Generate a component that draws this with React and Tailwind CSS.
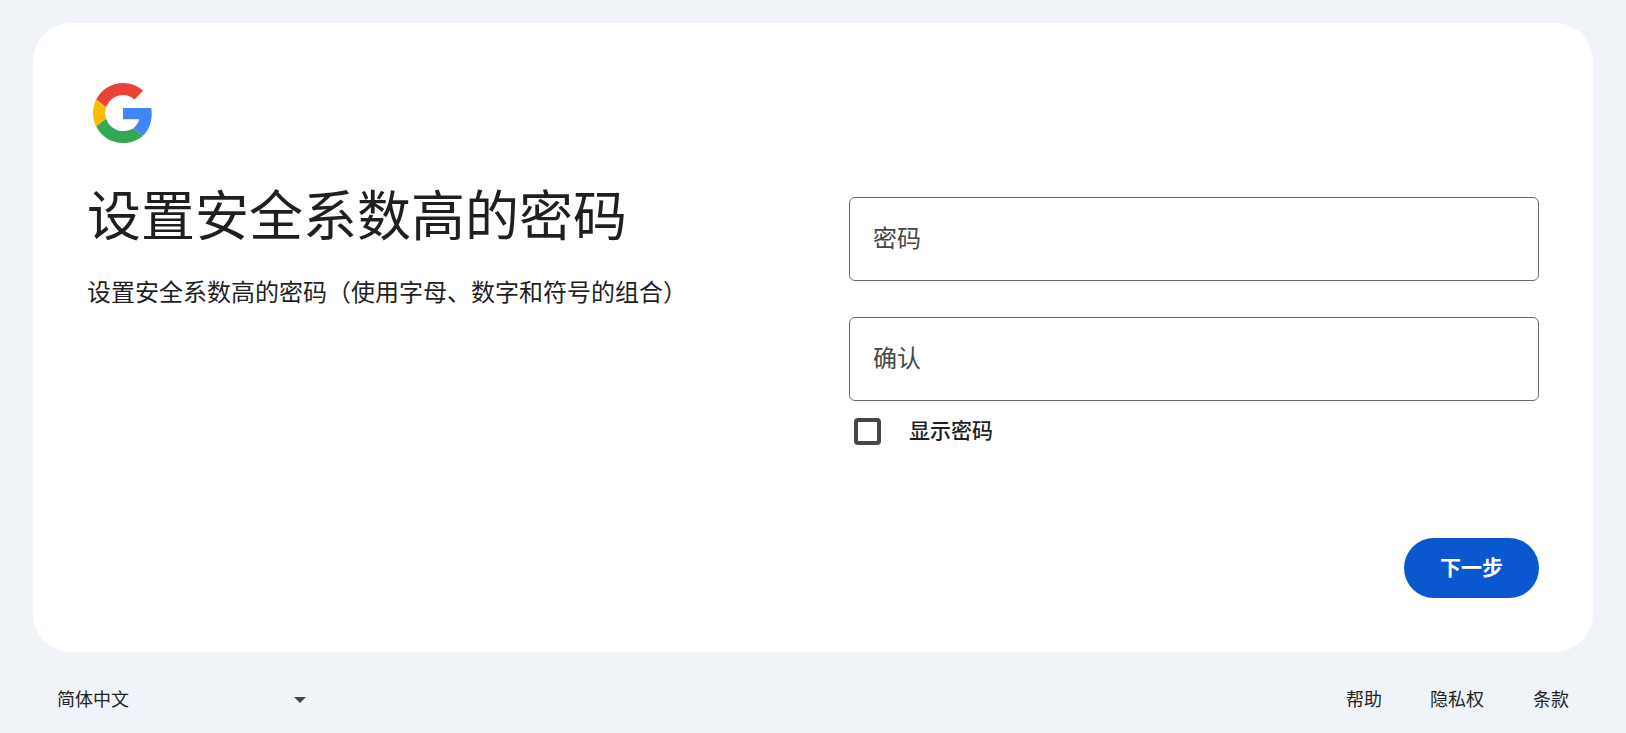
const font = { fontFamily: '"Noto Sans CJK SC", "Liberation Sans", sans-serif' };

function GoogleLogo() {
  return (
    <svg viewBox="0 0 48 48" className="w-[60px] h-[60px] block ml-[6px]">
      <path fill="#EA4335" d="M24 9.5c3.54 0 6.71 1.22 9.21 3.6l6.85-6.85C35.9 2.38 30.47 0 24 0 14.62 0 6.51 5.38 2.56 13.22l7.98 6.19C12.43 13.72 17.74 9.5 24 9.5z" />
      <path fill="#4285F4" d="M46.98 24.55c0-1.57-.15-3.09-.38-4.55H24v9.02h12.94c-.58 2.96-2.26 5.48-4.78 7.18l7.73 6c4.51-4.18 7.09-10.36 7.09-17.65z" />
      <path fill="#FBBC05" d="M10.53 28.59c-.48-1.45-.76-2.99-.76-4.59s.27-3.14.76-4.59l-7.98-6.19C.92 16.46 0 20.12 0 24c0 3.88.92 7.54 2.56 10.78l7.97-6.19z" />
      <path fill="#34A853" d="M24 48c6.48 0 11.93-2.13 15.89-5.81l-7.73-6c-2.15 1.45-4.92 2.3-8.16 2.3-6.26 0-11.57-4.22-13.47-9.91l-7.98 6.19C6.51 42.62 14.62 48 24 48z" />
    </svg>
  );
}

function Field({ label }) {
  return (
    <div className="h-[84px] border border-[#6c6e6d] rounded-[6px] flex items-center pl-[23px] pb-[4px] text-[24px] text-[#444746]">
      {label}
    </div>
  );
}

export default function App() {
  return (
    <div className="min-h-[733px] bg-[#f0f4f9] overflow-hidden" style={font}>
      <main className="mt-[23px] mx-[33px] w-[1560px] h-[629px] bg-white rounded-[38px] pt-[60px] pl-[54px] pr-[54px] pb-[54px] flex flex-col">
        <GoogleLogo />
        <div className="flex-1 grid grid-cols-[762px_1fr]">
          <div>
            <h1 className="mt-[35px] text-[54px] leading-[70px] font-normal text-[#1f1f1f]">设置安全系数高的密码</h1>
            <p className="mt-[27px] text-[24px] leading-[32px] text-[#1f1f1f]">设置安全系数高的密码（使用字母、数字和符号的组合）</p>
          </div>
          <div className="pt-[54px]">
            <Field label="密码" />
            <div className="mt-[36px]">
              <Field label="确认" />
            </div>
            <label className="mt-[13px] flex items-center">
              <span className="ml-[5px] w-[27px] h-[27px] border-[4px] border-[#444746] rounded-[4px]" />
              <span className="ml-[28px] pb-[4px] text-[21px] font-medium text-[#1f1f1f]">显示密码</span>
            </label>
          </div>
        </div>
        <div className="flex justify-end">
          <button className="w-[135px] h-[60px] rounded-full bg-[#0b57d0] text-white text-[21px] font-semibold pb-[2px]">下一步</button>
        </div>
      </main>
      <footer className="h-[81px] flex items-center justify-between pt-[12px] pl-[57px] pr-[57px] text-[18px] text-[#1f1f1f]">
        <div className="w-[249px] flex items-center justify-between">
          <span>简体中文</span>
          <span className="w-0 h-0 border-x-[6px] border-x-transparent border-t-[6px] border-t-[#444746] mt-[2px]" />
        </div>
        <nav className="flex">
          <span className="mr-[48px]">帮助</span>
          <span className="mr-[49px]">隐私权</span>
          <span>条款</span>
        </nav>
      </footer>
    </div>
  );
}
